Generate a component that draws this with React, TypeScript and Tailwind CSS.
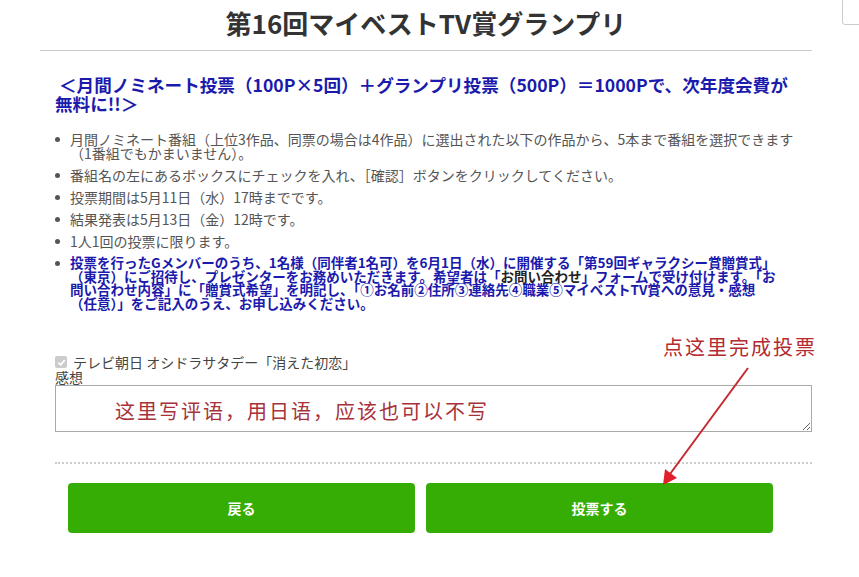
import React from 'react';

const jp = { fontFamily: '"Noto Sans CJK JP", "Noto Sans", sans-serif' };
const zh = { fontFamily: '"Noto Sans CJK SC", "Noto Sans CJK JP", serif' };

function Dot() {
  return <span className="mt-[5px] h-[5px] w-[5px] shrink-0 rounded-full bg-[#555]" />;
}

export default function App() {
  const items = [
    ['月間ノミネート番組（上位3作品、同票の場合は4作品）に選出された以下の作品から、5本まで番組を選択できます', '（1番組でもかまいません）。'],
    ['番組名の左にあるボックスにチェックを入れ、［確認］ボタンをクリックしてください。'],
    ['投票期間は5月11日（水）17時までです。'],
    ['結果発表は5月13日（金）12時です。'],
    ['1人1回の投票に限ります。'],
  ];

  return (
    <div className="relative h-[577px] w-[859px] overflow-hidden bg-white" style={jp}>
      {/* widget edge at the top right */}
      <div className="absolute left-[842px] top-[-2px] h-[27px] w-[30px] rounded-[3px] border border-[#ccc]" />

      <div className="ml-[40px] w-[772px]">
        <div className="border-b border-[#ccc] pb-[8px] pt-[4px]">
          <h1 className="text-center text-[26px] font-bold leading-[38px] text-[#333]">第16回マイベストTV賞グランプリ</h1>
        </div>

        <div className="mt-[24px] pl-[15px] text-[17.6px] font-bold leading-[19px] text-[#1a1aad]">
          <div className="whitespace-nowrap pl-[4px]">＜月間ノミネート投票（100P×5回）＋グランプリ投票（500P）＝1000Pで、次年度会費が</div>
          <div className="whitespace-nowrap">無料に!!＞</div>
        </div>

        <ul className="mt-[19px] flex flex-col gap-[8px] pl-[15px] text-[14px] leading-[14px] text-[#555]">
          {items.map((lines, i) => (
            <li key={i} className="flex gap-[10px]">
              <Dot />
              <div>
                {lines.map((l, j) => (
                  <div key={j} className="whitespace-nowrap">{l}</div>
                ))}
              </div>
            </li>
          ))}
          <li className="flex gap-[10px]">
            <Dot />
            <div className="text-[13.5px] font-bold leading-[13.5px] text-[#1a1aad]">
              <div className="whitespace-nowrap">投票を行ったGメンバーのうち、1名様（同伴者1名可）を6月1日（水）に開催する「第59回ギャラクシー賞贈賞式」</div>
              <div className="whitespace-nowrap">（東京）にご招待し、プレゼンターをお務めいただきます。希望者は「<span className="text-[#222]">お問い合わせ</span>」フォームで受け付けます。「お</div>
              <div className="whitespace-nowrap">問い合わせ内容」に「贈賞式希望」を明記し、「①お名前②住所③連絡先④職業⑤マイベストTV賞への意見・感想</div>
              <div className="whitespace-nowrap">（任意）」をご記入のうえ、お申し込みください。</div>
            </div>
          </li>
        </ul>

        <div className="mt-[45px] pl-[15px] text-[14px] leading-[14px] text-[#444]">
          <label className="flex items-center gap-[6px]">
            <span className="flex h-[12px] w-[12px] items-center justify-center rounded-[2px] bg-[#ccc]">
              <svg width="9" height="9" viewBox="0 0 10 10">
                <path d="M1.5 5.2 L4 7.6 L8.6 2.4" fill="none" stroke="#fff" strokeWidth="1.8" />
              </svg>
            </span>
            テレビ朝日 オシドラサタデー「消えた初恋」
          </label>
          <div className="mt-[1px]">感想</div>
          <textarea className="mt-[1px] block h-[47px] w-[757px] border border-[#aaa] bg-white" />
        </div>

        <div className="ml-[15px] mt-[30px] border-t-2 border-dotted border-[#ccc]" />

        <div className="mt-[19px] flex gap-[11px] pl-[28px]">
          <button className="h-[50px] w-[347px] rounded-[4px] bg-[#36ad04] text-[14px] font-bold text-white">戻る</button>
          <button className="h-[50px] w-[347px] rounded-[4px] bg-[#36ad04] text-[14px] font-bold text-white">投票する</button>
        </div>
      </div>

      {/* red annotations */}
      <div className="absolute left-[663px] top-[335px] whitespace-nowrap text-[20px] leading-[24px] tracking-[2px] text-[#b32a30]" style={zh}>
        点这里完成投票
      </div>
      <div className="absolute left-[115px] top-[398px] whitespace-nowrap text-[20px] leading-[26px] tracking-[2px] text-[#a8323a]" style={zh}>
        这里写评语，用日语，应该也可以不写
      </div>
      <svg className="absolute left-0 top-0" width="859" height="577" viewBox="0 0 859 577">
        <line x1="748" y1="368" x2="670" y2="474" stroke="#c42a30" strokeWidth="2" />
        <polygon points="663,485 665,469 677,478" fill="#e0202a" />
      </svg>
    </div>
  );
}
